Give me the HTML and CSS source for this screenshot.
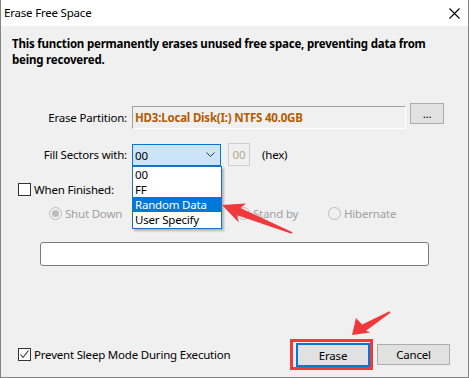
FILE: index.html
```html
<!DOCTYPE html>
<html lang="en">
<head>
    <meta charset="UTF-8">
    <title>Erase Free Space</title>
    <link rel="stylesheet" href="styles.css">
</head>
<body>
    <div class="window">
        <div class="titlebar">
            <span class="title">Erase Free Space</span>
            <svg class="close" width="11" height="11" viewBox="0 0 11 11">
                <path d="M0.5 0.5 L10.5 10.5 M10.5 0.5 L0.5 10.5" stroke="#000" stroke-width="1.1" fill="none"/>
            </svg>
        </div>

        <div class="content">
            <p class="intro">This function permanently erases unused free space, preventing data from<br>being recovered.</p>

            <div class="row partition-row">
                <label class="label">Erase Partition:</label>
                <div class="sunken">HD3:Local Disk(I:) NTFS 40.0GB</div>
                <button class="btn small-btn">...</button>
            </div>

            <div class="row fill-row">
                <label class="label">Fill Sectors with:</label>
                <div class="combo">
                    <span>00</span>
                    <svg width="9" height="6" viewBox="0 0 9 6">
                        <path d="M0.5 0.5 L4.5 4.5 L8.5 0.5" stroke="#333" stroke-width="1" fill="none"/>
                    </svg>
                    <ul class="dropdown">
                        <li>00</li>
                        <li>FF</li>
                        <li class="active">Random Data</li>
                        <li>User Specify</li>
                    </ul>
                </div>
                <div class="hexbox">00</div>
                <span class="hex">(hex)</span>
            </div>

            <div class="row check-row">
                <span class="checkbox"></span>
                <span>When Finished:</span>
            </div>

            <div class="row radio-row">
                <div class="radio-item first"><span class="radio checked"></span>Shut Down</div>
                <div class="radio-item second"><span class="radio"></span>Stand by</div>
                <div class="radio-item"><span class="radio"></span>Hibernate</div>
            </div>

            <div class="progress"></div>

            <div class="bottom-row">
                <div class="row">
                    <span class="checkbox">
                        <svg width="11" height="11" viewBox="0 0 11 11">
                            <path d="M1.5 5.5 L4 8.5 L9.5 1.5" stroke="#333" stroke-width="1.1" fill="none"/>
                        </svg>
                    </span>
                    <span>Prevent Sleep Mode During Execution</span>
                </div>
                <div class="buttons">
                    <div class="highlight">
                        <button class="btn primary">Erase</button>
                    </div>
                    <button class="btn cancel">Cancel</button>
                </div>
            </div>
        </div>

        <svg class="arrows" width="469" height="378" viewBox="0 0 469 378">
            <polygon fill="#f0393c" points="222,205 246,203.5 240.5,208 292.5,232.3 291.5,233.7 237.2,215.2 238.8,222.5"/>
            <polygon fill="#f0393c" points="352,335 356,318 362.2,324.4 389.5,311.3 390.5,312.7 366,330.8 370.5,332.5"/>
        </svg>
    </div>
</body>
</html>
```

FILE: styles.css
```css
* {
    box-sizing: border-box;
    margin: 0;
    padding: 0;
}

body {
    font-family: 'Noto Sans', 'Open Sans', sans-serif;
    font-size: 11.5px;
    letter-spacing: -0.2px;
    color: #000;
    background: #fff;
}

.window {
    position: relative;
    width: 469px;
    height: 378px;
    display: flex;
    flex-direction: column;
    border: 1px solid #838383;
    border-top: none;
    background: #f0f0f0;
}

.titlebar {
    height: 26px;
    flex: none;
    background: #fff;
    display: flex;
    align-items: center;
    justify-content: space-between;
    padding: 0 8px 1px 3px;
}

.close {
    margin-top: 2px;
}

.content {
    flex: 1;
    display: flex;
    flex-direction: column;
    padding: 10px 18px 7px 11px;
}

.intro {
    font-weight: 700;
    line-height: 16px;
    white-space: nowrap;
}

.row {
    display: flex;
    align-items: center;
}

.label {
    width: 115px;
    text-align: right;
    flex: none;
}

.partition-row {
    margin-top: 35px;
    align-items: flex-start;
}

.partition-row .label {
    line-height: 23px;
    margin-top: 3px;
}

.sunken {
    width: 274px;
    height: 23px;
    margin: 3px 0 0 5px;
    padding-left: 2px;
    line-height: 21px;
    border: 1px solid #a0a0a0;
    border-right-color: #fff;
    border-bottom-color: #fff;
    color: #b35c00;
    font-weight: 700;
}

.btn {
    font-family: inherit;
    font-size: 11.5px;
    letter-spacing: -0.2px;
    background: #e1e1e1;
    border: 1px solid #adadad;
    color: #000;
}

.small-btn {
    width: 34px;
    height: 21px;
    margin-left: 4px;
    line-height: 12px;
}

.fill-row {
    margin-top: 14px;
}

.combo {
    position: relative;
    width: 89px;
    height: 22px;
    margin-left: 5px;
    border: 1px solid #0078d7;
    background: #cce4f7;
    display: flex;
    align-items: center;
    justify-content: space-between;
    padding: 1px 5px 0 2px;
}

.dropdown {
    position: absolute;
    top: 21px;
    left: -1px;
    width: 90px;
    height: 63px;
    list-style: none;
    background: #fff;
    border: 1px solid #1f6fc2;
    box-shadow: 2px 2px 2px rgba(0,0,0,0.25);
    z-index: 2;
}

.dropdown li {
    height: 15px;
    line-height: 15px;
    padding-left: 2px;
}

.dropdown li.active {
    background: #0078d7;
    color: #fff;
}

.hexbox {
    width: 22px;
    height: 23px;
    margin-left: 7px;
    border: 1px solid #cfcfcf;
    color: #b9a78d;
    text-align: center;
    line-height: 21px;
}

.hex {
    margin-left: 12px;
}

.check-row {
    margin-top: 16px;
    padding-left: 6px;
}

.checkbox {
    width: 13px;
    height: 13px;
    border: 1px solid #333;
    background: #fff;
    margin-right: 3px;
    flex: none;
    display: flex;
    align-items: center;
    justify-content: center;
}

.radio-row {
    margin-top: 9px;
    padding-left: 37px;
    color: #a0a0a0;
    height: 15px;
}

.radio-item {
    display: flex;
    align-items: center;
}

.radio-item.first {
    width: 188px;
}

.radio-item.second {
    width: 91px;
}

.radio {
    width: 13px;
    height: 13px;
    border: 1px solid #bcbcbc;
    border-radius: 50%;
    background: #f0f0f0;
    margin-right: 3px;
    display: flex;
    align-items: center;
    justify-content: center;
}

.radio.checked::after {
    content: '';
    width: 7px;
    height: 7px;
    border-radius: 50%;
    background: #bcbcbc;
}

.progress {
    width: 389px;
    height: 24px;
    margin: 21px 0 0 28px;
    background: #fff;
    border: 1px solid #7a7a7a;
    border-radius: 3px;
}

.bottom-row {
    margin-top: auto;
    display: flex;
    align-items: center;
    justify-content: space-between;
    padding-left: 6px;
}

.buttons {
    display: flex;
    align-items: center;
}

.highlight {
    border: 3px solid #ef3b3e;
    padding: 1px 0 0 3px;
    display: flex;
}

.primary {
    width: 74px;
    height: 24px;
    border: 2px solid #0078d7;
}

.cancel {
    width: 73px;
    height: 21px;
    margin-left: 4px;
}

.arrows {
    position: absolute;
    top: 0;
    left: -1px;
    pointer-events: none;
    z-index: 3;
}
```
